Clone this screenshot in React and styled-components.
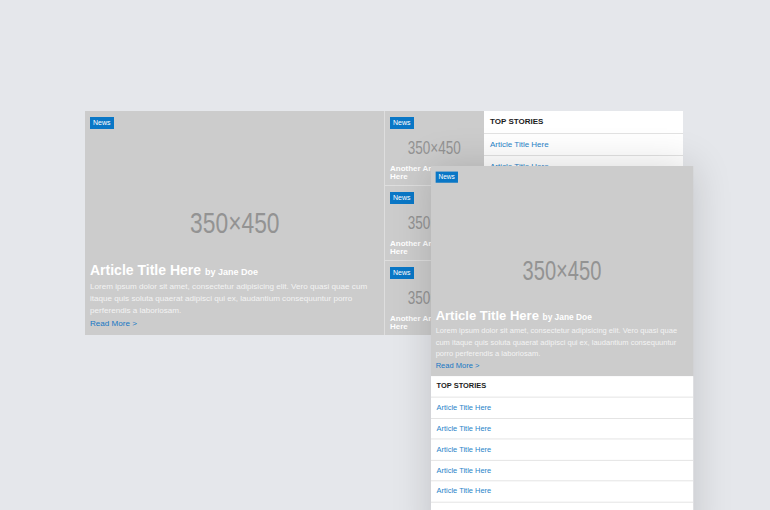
import React from "react";
import styled, { createGlobalStyle } from "styled-components";

const Global = createGlobalStyle`
  html, body {
    margin: 0;
    background: #e5e7eb;
  }
  body {
    font-family: "Liberation Sans", Arial, sans-serif;
    overflow: hidden;
  }
`;

const Stage = styled.div`
  position: relative;
  width: 770px;
  height: 510px;
  box-sizing: border-box;
  padding: 111px 0 0 85px;
  overflow: hidden;
`;

const Desktop = styled.div`
  display: grid;
  grid-template-columns: 299px 100px 199px;
  width: 598px;
  height: 224px;
`;

const Mobile = styled.div`
  position: absolute;
  left: 431px;
  top: 166px;
  width: 282px;
  transform: scale(0.93);
  transform-origin: 0 0;
  box-shadow: 0 0 40px rgba(0, 0, 0, 0.16);
`;

const Tile = styled.article`
  display: grid;
  height: ${p => p.$h}px;
  background: #cccccc;
  color: #fff;
  overflow: hidden;

  & > * {
    grid-area: 1 / 1;
  }
`;

const Badge = styled.span`
  align-self: start;
  justify-self: start;
  margin: 6px 0 0 5px;
  padding: 0 3px;
  background: #0a77c6;
  color: #fff;
  font-size: 7px;
  line-height: 12px;
`;

// placeholder images use a condensed face; squeeze Liberation Sans to match
const Placeholder = styled.span`
  place-self: center;
  font-family: "Liberation Sans", sans-serif;
  font-size: ${p => p.$size}px;
  line-height: 1;
  color: #939393;
  white-space: nowrap;
  transform: scaleX(${p => p.$squeeze});
`;

const Caption = styled.div`
  align-self: end;
  padding: 0 5px ${p => p.$pb}px;
`;

const Title = styled.h2`
  margin: 0 0 2px;
  font-size: 14px;
  line-height: 14px;
  font-weight: bold;

  small {
    font-size: 9px;
  }
`;

const Excerpt = styled.p`
  margin: 0;
  font-size: 8.1px;
  line-height: 12.3px;
  color: #f3f3f3;
`;

const ReadMore = styled.a`
  display: block;
  font-size: 8.1px;
  line-height: 12.3px;
  color: #1677c4;
  text-decoration: none;
`;

const SmallTitle = styled.h3`
  margin: 0;
  font-size: 8px;
  line-height: 7.5px;
  font-weight: bold;
`;

const Column = styled.div`
  display: grid;
  grid-template-rows: repeat(3, 74px);
  gap: 1px;
  background: #dedede;
  border-left: 1px solid #dedede;
`;

const Stories = styled.section`
  background: #fff;
  overflow: hidden;
`;

const StoriesHead = styled.h4`
  margin: 0;
  padding: 0 6px;
  height: 22px;
  line-height: 22px;
  font-size: 8px;
  font-weight: bold;
  color: #1c1c1c;
  border-bottom: 1px solid #e2e2e2;
`;

const StoryRow = styled.a`
  display: block;
  padding: 0 6px;
  height: ${p => p.$pitch - 1}px;
  line-height: ${p => p.$pitch - 1}px;
  font-size: 8px;
  color: #2a84c9;
  text-decoration: none;
  border-bottom: 1px solid #e2e2e2;
`;

const lorem =
  "Lorem ipsum dolor sit amet, consectetur adipisicing elit. Vero quasi quae cum itaque quis soluta quaerat adipisci qui ex, laudantium consequuntur porro perferendis a laboriosam.";

function Feature({ height, squeeze }) {
  return (
    <Tile $h={height}>
      <Badge>News</Badge>
      <Placeholder $size={30} $squeeze={squeeze}>350×450</Placeholder>
      <Caption $pb={5}>
        <Title>
          Article Title Here <small>by Jane Doe</small>
        </Title>
        <Excerpt>{lorem}</Excerpt>
        <ReadMore href="#">Read More &gt;</ReadMore>
      </Caption>
    </Tile>
  );
}

function SideTile() {
  return (
    <Tile $h={74}>
      <Badge>News</Badge>
      <Placeholder $size={18} $squeeze={0.75}>350×450</Placeholder>
      <Caption $pb={5}>
        <SmallTitle>Another Article Title Here</SmallTitle>
      </Caption>
    </Tile>
  );
}

function TopStories({ count, pitch }) {
  const rows = Array.from({ length: count });
  return (
    <Stories>
      <StoriesHead>TOP STORIES</StoriesHead>
      {rows.map((_, i) => (
        <StoryRow key={i} href="#" $pitch={pitch}>
          Article Title Here
        </StoryRow>
      ))}
    </Stories>
  );
}

export default function App() {
  return (
    <Stage>
      <Global />
      <Desktop>
        <Feature height={224} squeeze={0.76} />
        <Column>
          <SideTile />
          <SideTile />
          <SideTile />
        </Column>
        <TopStories count={9} pitch={22} />
      </Desktop>
      <Mobile>
        <Feature height={226} squeeze={0.72} />
        <TopStories count={7} pitch={22.6} />
      </Mobile>
    </Stage>
  );
}
